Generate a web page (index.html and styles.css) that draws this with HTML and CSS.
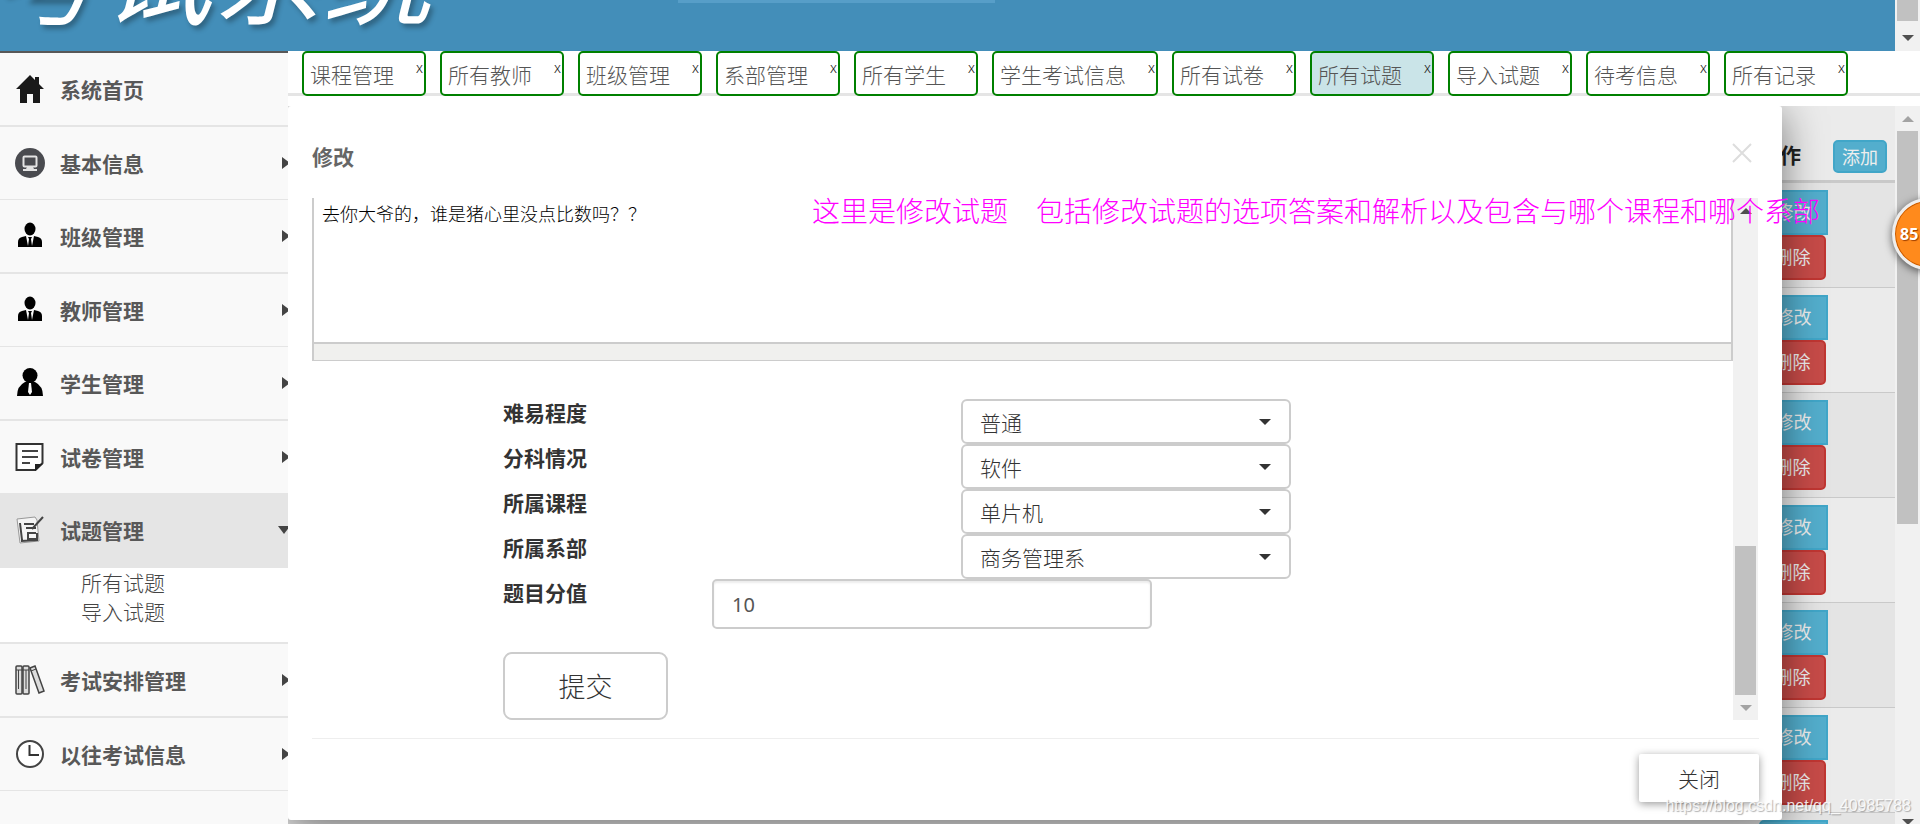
FILE: index.html
```html
<!DOCTYPE html>
<html lang="zh-CN">
<head>
<meta charset="utf-8">
<title>考试系统</title>
<link rel="stylesheet" href="styles.css">
</head>
<body>
<header class="banner">
  <h1 class="banner-title">考试系统</h1>
  <div class="banner-strip"></div>
  <div class="scrollbar banner-scroll"><span class="thumb"></span><span class="arrow down dark"></span></div>
</header>
<div class="layout">
  <nav class="sidebar">
    <a class="nav-item" href="#"><svg class="icon" viewBox="0 0 30 30"><path fill="#1a1a1a" d="M15 1 1 15h4v14h7v-9h6v9h7V15h4l-5-5V3h-4v3z"/></svg>系统首页</a>
    <a class="nav-item has-sub" href="#"><svg class="icon" viewBox="0 0 30 30"><circle cx="15" cy="15" r="15" fill="#4a4b50"/><rect x="8.500" y="8.500" width="13" height="10" rx="1" fill="none" stroke="#e4e4e4" stroke-width="2"/><path fill="#e4e4e4" d="M12 19h6l1 2h3v2H8v-2h3z"/></svg>基本信息</a>
    <a class="nav-item has-sub" href="#"><svg class="icon" viewBox="0 0 30 30"><ellipse cx="15" cy="8" rx="5.500" ry="6.500"/><path d="M3 26v-5q0-4 4-5l4-1 2 10 1-7-1-2h4l-1 2 1 7 2-10 4 1q4 1 4 5v5z"/></svg>班级管理</a>
    <a class="nav-item has-sub" href="#"><svg class="icon" viewBox="0 0 30 30"><ellipse cx="15" cy="8" rx="5.500" ry="6.500"/><path d="M3 26v-5q0-4 4-5l4-1 2 10 1-7-1-2h4l-1 2 1 7 2-10 4 1q4 1 4 5v5z"/></svg>教师管理</a>
    <a class="nav-item has-sub" href="#"><svg class="icon" viewBox="0 0 30 30"><circle cx="15" cy="7.500" r="7.500"/><path d="M2 28q0-10 8-14h10q8 4 8 14z"/><path fill="#f9f9f9" d="M14 15h2l1 9-2 3-2-3z"/></svg>学生管理</a>
    <a class="nav-item has-sub" href="#"><svg class="icon" viewBox="0 0 30 30"><path fill="#fff" stroke="#333" stroke-width="2" d="M1.500 2h26v19l-7 7H1.500z"/><path d="M20 29v-7h8z" fill="#222"/><path stroke="#444" stroke-width="2" d="M7 9h16M7 15h16M7 21h8"/></svg>试卷管理</a>
    <a class="nav-item active" href="#"><svg class="icon" viewBox="0 0 30 30"><path fill="#f4f4f4" stroke="#999" d="M2 4l18-2 2 3 2 21-19 2z"/><path stroke="#444" stroke-width="2" fill="none" d="M9 9h10M11 13h10M12 18h9M13 19v5h9v-6M5 8l2 17M6 26l17-1"/><path stroke="#444" stroke-width="2" d="M28 2 17 14"/></svg>试题管理</a>
    <div class="submenu"><a href="#">所有试题</a><a href="#">导入试题</a></div>
    <a class="nav-item has-sub" href="#"><svg class="icon" viewBox="0 0 30 30"><g fill="#ddd" stroke="#444" stroke-width="1.500"><rect x="1" y="1" width="6" height="28" rx="1"/><rect x="8" y="1" width="6" height="28" rx="1"/><path d="m15 3 5-2 9 25-5 2z"/></g><path stroke="#444" d="M1 5h13M3.500 5v19M11 5v19M16 6l5-2"/></svg>考试安排管理</a>
    <a class="nav-item has-sub" href="#"><svg class="icon" viewBox="0 0 30 30"><circle cx="15" cy="15" r="13" fill="#fff" stroke="#444" stroke-width="2"/><path fill="none" stroke="#333" stroke-width="2" d="M14.500 6v10H24"/></svg>以往考试信息</a>
  </nav>
  <main class="main">
    <div class="tabs">
      <div class="tab">课程管理<button class="tab-close">x</button></div>
      <div class="tab">所有教师<button class="tab-close">x</button></div>
      <div class="tab">班级管理<button class="tab-close">x</button></div>
      <div class="tab">系部管理<button class="tab-close">x</button></div>
      <div class="tab">所有学生<button class="tab-close">x</button></div>
      <div class="tab">学生考试信息<button class="tab-close">x</button></div>
      <div class="tab">所有试卷<button class="tab-close">x</button></div>
      <div class="tab current">所有试题<button class="tab-close">x</button></div>
      <div class="tab">导入试题<button class="tab-close">x</button></div>
      <div class="tab">待考信息<button class="tab-close">x</button></div>
      <div class="tab">所有记录<button class="tab-close">x</button></div>
    </div>
    <div class="frame">
      <div class="list">
        <table class="grid">
          <thead><tr><th></th><th class="col-op">操作</th><th class="col-add"><button class="btn add">添加</button></th></tr></thead>
          <tbody>
            <tr><td></td><td><button class="btn edit">修改</button><button class="btn del">删除</button></td><td></td></tr>
            <tr><td></td><td><button class="btn edit">修改</button><button class="btn del">删除</button></td><td></td></tr>
            <tr><td></td><td><button class="btn edit">修改</button><button class="btn del">删除</button></td><td></td></tr>
            <tr><td></td><td><button class="btn edit">修改</button><button class="btn del">删除</button></td><td></td></tr>
            <tr><td></td><td><button class="btn edit">修改</button><button class="btn del">删除</button></td><td></td></tr>
            <tr><td></td><td><button class="btn edit">修改</button><button class="btn del">删除</button></td><td></td></tr>
            <tr><td></td><td><button class="btn edit">修改</button><button class="btn del">删除</button></td><td></td></tr>
          </tbody>
        </table>
      </div>
      <div class="scrollbar frame-scroll"><span class="arrow up"></span><span class="thumb"></span><span class="arrow down dark"></span></div>

      <section class="modal" role="dialog" aria-labelledby="modal-title">
        <div class="modal-head">
          <h2 id="modal-title">修改</h2>
          <button class="modal-close" aria-label="关闭窗口"><svg viewBox="0 0 20 20"><path d="M1 1l18 18M19 1 1 19" stroke="#ddd" stroke-width="2"/></svg></button>
        </div>
        <div class="modal-body">
          <form class="form">
            <textarea class="editor" aria-label="题目">去你大爷的，谁是猪心里没点比数吗？？</textarea>
            <div class="editor-status"></div>
            <div class="row"><label for="level">难易程度</label><select id="level"><option>普通</option></select></div>
            <div class="row"><label for="branch">分科情况</label><select id="branch"><option>软件</option></select></div>
            <div class="row"><label for="course">所属课程</label><select id="course"><option>单片机</option></select></div>
            <div class="row"><label for="dept">所属系部</label><select id="dept"><option>商务管理系</option></select></div>
            <div class="row"><label for="score">题目分值</label><input id="score" type="text" value="10"></div>
            <div class="row"><button class="submit" type="button">提交</button></div>
          </form>
          <div class="scrollbar body-scroll"><span class="arrow up dark"></span><span class="thumb"></span><span class="arrow down"></span></div>
        </div>
        <div class="modal-foot"><button class="close-btn">关闭</button></div>
      </section>
    </div>
  </main>
</div>
<p class="note">这里是修改试题　包括修改试题的选项答案和解析以及包含与哪个课程和哪个系部</p>
<div class="badge">85</div>
<div class="watermark">https://blog.csdn.net/qq_40985788</div>
</body>
</html>
```

FILE: styles.css
```css
* { box-sizing: border-box; }
body {
  margin: 0;
  height: 100vh;
  overflow: hidden;
  position: relative;
  display: flex;
  flex-direction: column;
  background: #fff;
  color: #333;
  font: 300 21px/30px "Noto Sans CJK SC", sans-serif;
}
a { color: inherit; text-decoration: none; }
button, input, select, textarea { font: inherit; color: inherit; margin: 0; }
button { cursor: pointer; }

.banner {
  flex: none;
  height: 51px;
  display: flex;
  background: #438eb9;
  overflow: hidden;
}
.banner-title {
  flex: none;
  align-self: flex-end;
  width: 678px;
  margin: 0 0 18px;
  text-indent: -8px;
  font-size: 110px;
  line-height: 128px;
  font-weight: 400;
  font-style: italic;
  color: #fff;
  text-shadow: 3px 4px 5px rgba(0, 0, 0, .3);
}
.banner-strip { width: 317px; height: 3px; background: #579ec8; }

.scrollbar {
  flex: none;
  width: 25px;
  background: #f1f1f1;
  display: flex;
  flex-direction: column;
  align-items: center;
}
.thumb { width: 21px; background: #c1c1c1; }
.arrow { flex: none; height: 25px; display: flex; align-items: center; color: #a3a3a3; }
.arrow::before { content: ""; border: 6px solid transparent; }
.arrow.up::before { border-top: 0; border-bottom-color: currentColor; }
.arrow.down::before { border-bottom: 0; border-top-color: currentColor; }
.arrow.dark { color: #505050; }
.banner-scroll { margin-left: auto; }
.banner-scroll .thumb { height: 21px; }
.banner-scroll .arrow { height: 30px; padding-top: 4px; }

.layout { flex: 1; min-height: 0; display: flex; }

.sidebar {
  flex: none;
  width: 288px;
  background: #f9f9f9;
  border-top: 2px solid #585858;
  overflow: hidden;
}
.nav-item {
  height: 74px;
  padding-left: 15px;
  display: flex;
  align-items: center;
  gap: 15px;
  border-bottom: 2px solid #e5e5e5;
  color: #585858;
  font-weight: 700;
}
.nav-item:nth-child(even) { height: 73px; border-bottom-width: 1px; }
.icon { width: 30px; height: 30px; }
.has-sub::after, .active::after { content: ""; margin-left: auto; border: 6px solid transparent; }
.has-sub::after { border-right: 0; border-left: 8px solid #444; margin-right: -2px; }
.active::after { border-width: 8px 6px 0; border-top-color: #444; margin-right: -2px; }
.active { background: #e5e5e5; }
.submenu {
  height: 76px;
  padding-left: 81px;
  background: #fff;
  border-bottom: 2px solid #e5e5e5;
  color: #444;
}
.submenu a { display: block; line-height: 29px; }

.main { flex: 1; min-width: 0; display: flex; flex-direction: column; }
.tabs {
  flex: none;
  height: 45px;
  padding-left: 14px;
  display: flex;
  gap: 14px;
  background: linear-gradient(#e5e5e5, #e5e5e5) bottom / 100% 3px no-repeat;
}
.tab {
  min-width: 124px;
  padding: 6px 1px 0 6px;
  display: flex;
  justify-content: space-between;
  gap: 22px;
  border: 2px solid green;
  border-radius: 5px;
  background: #fff;
  color: #555;
  white-space: nowrap;
}
.tab.current { background: #cae4e8; }
.tab-close { align-self: flex-start; padding: 0; border: 0; background: none; color: #222; font-size: 15px; line-height: 16px; }

.frame {
  flex: 1;
  min-height: 0;
  margin-top: 10px;
  position: relative;
  display: flex;
  overflow: hidden;
}
.list { flex: 1; min-width: 0; background: #ebebeb; }
.grid { width: 100%; border-collapse: separate; border-spacing: 0; table-layout: fixed; }
.grid th { height: 77px; padding: 22px 0 0 8px; border-bottom: 3px solid #c9c9c9; text-align: left; font-weight: 700; color: #222; }
.grid td { height: 105px; padding: 7px 0 7px 8px; border-bottom: 1px solid #c9c9c9; vertical-align: top; }
.grid tbody tr:nth-child(odd) { background: #e4e4e4; }
.col-op { width: 74px; }
.col-add { width: 70px; }
.btn { display: block; padding: 0 0 4px; border: 2px solid; color: #eee; font-size: 18px; line-height: 24px; font-weight: 400; }
.add { width: 54px; height: 33px; padding: 0; margin-top: 4px; border-radius: 5px; background: #53aecd; border-color: #41a6c8; }
.edit { width: 69px; height: 45px; background: #53aecd; border-color: #41a6c8; border-radius: 5px 0 0 5px; }
.del { width: 67px; height: 45px; background: #c74b48; border-color: #c03632; border-radius: 5px; }
.frame-scroll .thumb { height: 393px; }
.frame-scroll .down { margin-top: auto; height: 5px; align-items: flex-start; }

.modal {
  position: absolute;
  inset: 0 138px 4px 0;
  padding: 0 23px 18px 24px;
  display: flex;
  flex-direction: column;
  background: #fff;
  border-radius: 3px;
  box-shadow: 0 8px 40px rgba(0, 0, 0, .5);
}
.modal-head { height: 92px; padding: 2px 7px 0 0; display: flex; justify-content: space-between; align-items: center; }
.modal-head h2 { margin: 6px 0 0; font-size: 21px; line-height: 30px; font-weight: 700; color: #666; }
.modal-close { padding: 0; width: 20px; height: 20px; border: 0; background: none; }
.modal-close svg { display: block; width: 20px; height: 20px; }
.modal-body { flex: 1; min-height: 0; padding-right: 1px; display: flex; }
.form { flex: 1; min-width: 0; }
.editor {
  display: block;
  width: 100%;
  height: 146px;
  padding: 0 8px;
  border: solid #ccc;
  border-width: 0 2px 2px;
  background: #fff;
  color: #000;
  font-size: 18px;
  line-height: 30px;
  resize: none;
  outline: 0;
}
.editor-status { height: 17px; margin-bottom: 38px; background: #f0f0ee; border: solid #ccc; border-width: 0 2px 1px; }
.row { display: grid; grid-template-columns: 191fr 209fr 249fr 330fr 442fr; align-items: start; }
.row label { grid-column: 2; line-height: 26px; font-weight: 700; }
.row select {
  grid-column: 4;
  height: 45px;
  padding: 0 17px;
  border: 2px solid #ccc;
  border-radius: 6px;
  appearance: none;
  background: #fff url("data:image/svg+xml,%3Csvg xmlns='http://www.w3.org/2000/svg' viewBox='0 0 12 6'%3E%3Cpath fill='%23333' d='M0 0h12L6 6z'/%3E%3C/svg%3E") no-repeat right 18px center / 12px 6px;
}
.row input {
  grid-column: 3 / 5;
  width: 76%;
  height: 50px;
  padding: 0 18px;
  border: 2px solid #ccc;
  border-radius: 5px;
  box-shadow: inset 0 2px 2px rgba(0, 0, 0, .08);
  color: #555;
  font: 400 20px/30px "Noto Sans", sans-serif;
}
.submit {
  grid-column: 2;
  width: 165px;
  height: 68px;
  margin-top: 23px;
  border: 2px solid #ccc;
  border-radius: 9px;
  background: #fff;
  font-size: 27px;
}
.body-scroll { height: 522px; }
.body-scroll .thumb { height: 149px; margin-top: auto; }
.modal-foot { flex: none; margin-top: 18px; padding-top: 15px; border-top: 1px solid #eee; display: flex; justify-content: flex-end; }
.close-btn { width: 120px; height: 48px; border: 0; border-radius: 2px; background: #fff; box-shadow: 0 2px 8px rgba(0, 0, 0, .4); }

.note { position: absolute; top: 190px; right: 100px; margin: 0; color: #f0f; font-size: 28px; line-height: 40px; white-space: nowrap; }
.badge {
  position: absolute;
  top: 198px;
  right: -44px;
  width: 72px;
  height: 72px;
  padding-left: 5px;
  border: 3px solid #eee;
  border-radius: 50%;
  background: #ff8a1c;
  box-shadow: inset 0 0 0 1px #c85a00, 0 2px 8px rgba(0, 0, 0, .6);
  color: #fff;
  font: 700 16px/66px "Open Sans", sans-serif;
  text-shadow: 1px 1px 1px #a04000;
}
.watermark {
  position: absolute;
  right: 9px;
  bottom: 8px;
  color: rgba(255, 255, 255, .85);
  font: 400 16px/20px "Liberation Sans", sans-serif;
  text-shadow: 1px 1px 1px rgba(0, 0, 0, .3);
}
```
